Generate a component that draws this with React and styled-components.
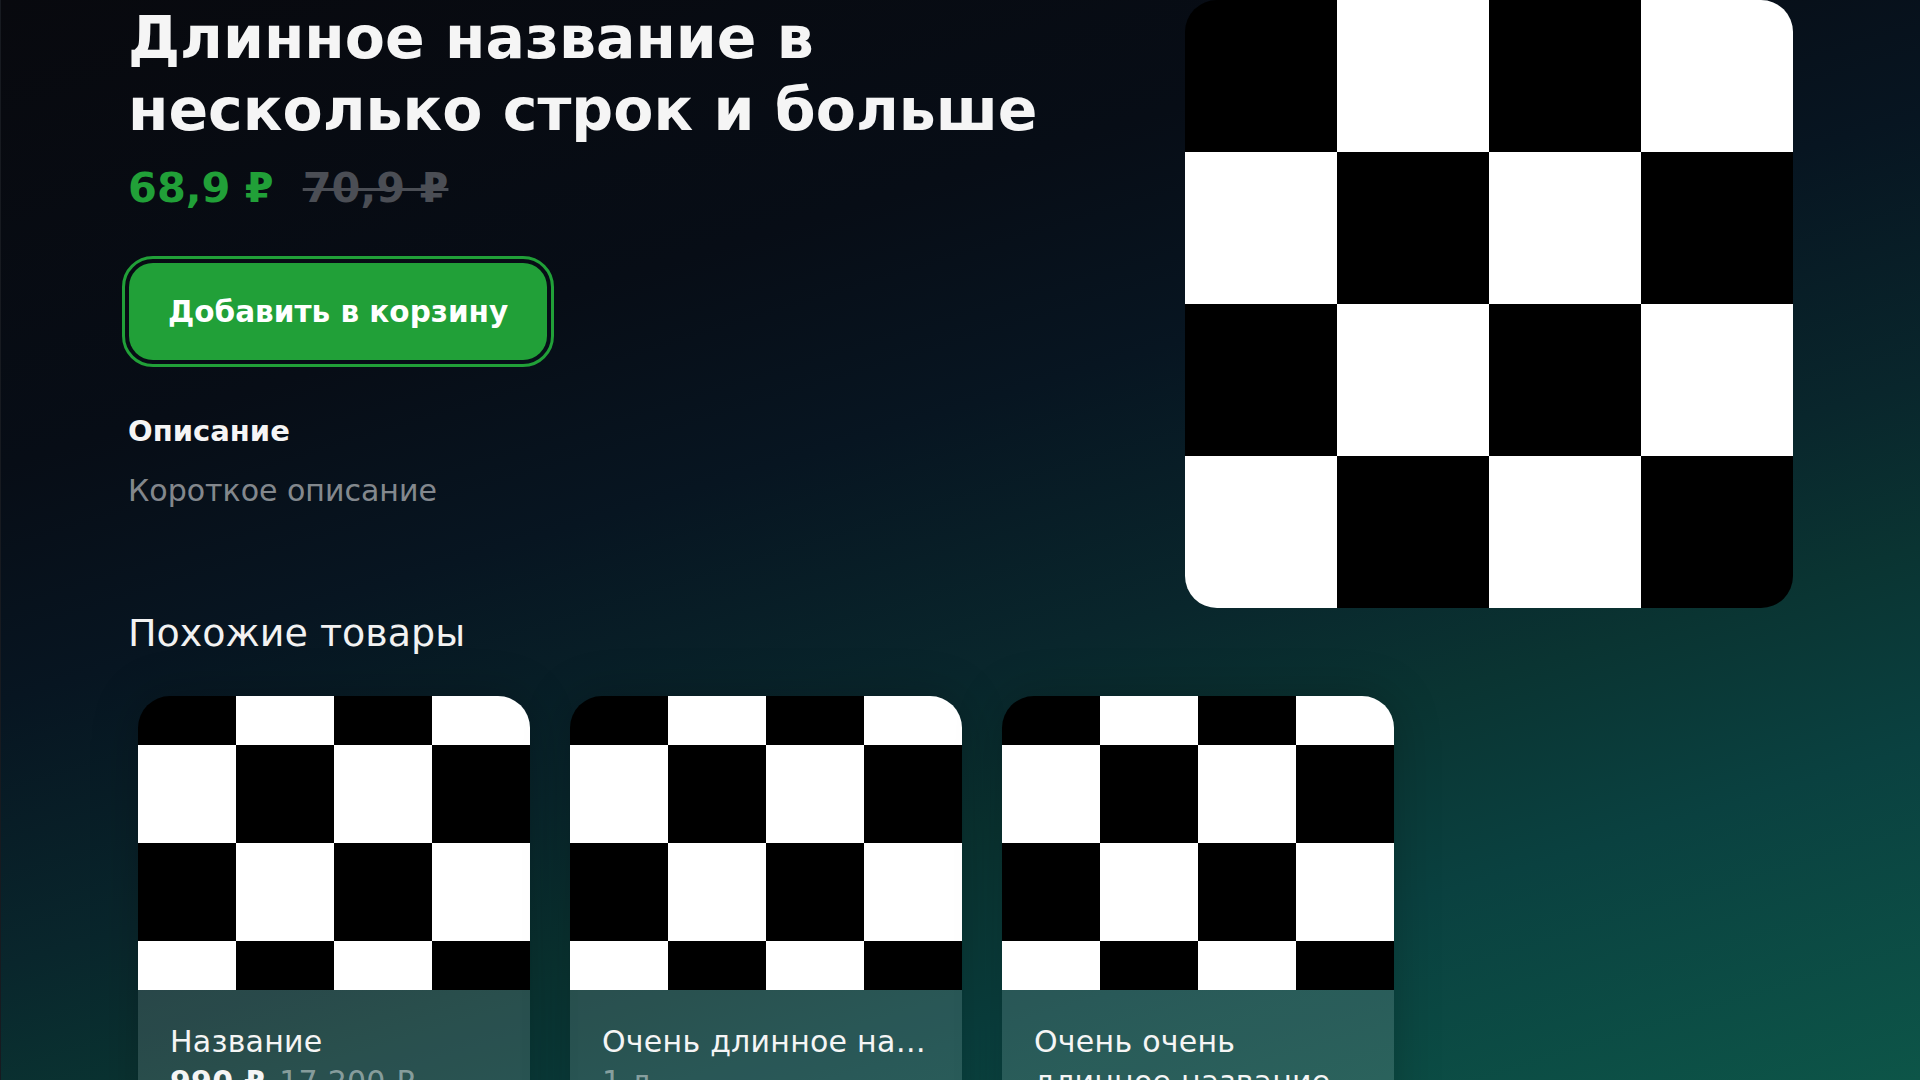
import React from "react";
import styled, { createGlobalStyle } from "styled-components";

const GlobalStyle = createGlobalStyle`
  html, body {
    margin: 0;
    padding: 0;
    width: 1920px;
    height: 1080px;
    overflow: hidden;
    background: #08090e;
  }
  * { box-sizing: border-box; }
`;

const Page = styled.div`
  width: 1920px;
  height: 1080px;
  overflow: hidden;
  padding: 0 127px 0 127px;
  font-family: "DejaVu Sans", "Noto Sans", sans-serif;
  color: #f5f5f5;
  border-left: 1px solid #171a20;
  background: linear-gradient(
    163deg,
    #08090e 0%,
    #070d16 28%,
    #071521 42%,
    #09262c 58%,
    #0a3432 68%,
    #0a4140 80%,
    #0d5548 100%
  );
`;

const TopRow = styled.div`
  display: flex;
  align-items: flex-start;
  gap: 64px;
`;

const Info = styled.div`
  flex: 1;
  min-width: 0;
  display: flex;
  flex-direction: column;
  align-items: flex-start;
  padding-top: 2px;
`;

const Title = styled.h1`
  margin: 0;
  font-size: 58.5px;
  line-height: 72px;
  font-weight: 700;
  color: #f5f5f5;
`;

const PriceRow = styled.div`
  margin-top: 18px;
  display: flex;
  align-items: baseline;
  gap: 29px;
  font-size: 41.5px;
  line-height: 48px;
  font-weight: 700;
`;

const Price = styled.span`
  color: ${(p) => (p.$old ? "#4b4e55" : "#21a038")};
  text-decoration: ${(p) => (p.$old ? "line-through" : "none")};
  text-decoration-thickness: 3px;
`;

const CartButton = styled.button`
  margin-top: 51px;
  margin-left: 1px;
  height: 97px;
  padding: 0 39px;
  border: none;
  border-radius: 24px;
  background: #21a038;
  color: #ffffff;
  font-family: inherit;
  font-size: 29.5px;
  font-weight: 700;
  line-height: 36px;
  outline: 3px solid #21a038;
  outline-offset: 4px;
  cursor: pointer;
`;

const SectionLabel = styled.div`
  margin-top: 53px;
  font-size: 29px;
  line-height: 36px;
  font-weight: 700;
  color: #f5f5f5;
`;

const Description = styled.div`
  margin-top: 24px;
  font-size: 30px;
  line-height: 36px;
  color: rgba(255, 255, 255, 0.52);
`;

const HeroImage = styled.div`
  flex: 0 0 608px;
  height: 608px;
  border-radius: 32px;
  overflow: hidden;
  & > svg {
    display: block;
    width: 100%;
    height: 100%;
  }
`;

const Heading = styled.h2`
  margin: 3px 0 0;
  font-size: 38px;
  line-height: 44px;
  font-weight: 400;
  color: #f2f2f2;
`;

const CardsRow = styled.div`
  margin-top: 41px;
  padding-left: 10px;
  display: flex;
  gap: 40px;
`;

const Card = styled.div`
  flex: 0 0 392px;
  width: 392px;
  border-radius: 32px;
  overflow: hidden;
  box-shadow: 0 0 48px rgba(0, 0, 0, 0.22);
`;

const CardImage = styled.div`
  width: 392px;
  height: 294px;
  overflow: hidden;
  & > svg {
    display: block;
    width: 100%;
    height: 100%;
  }
`;

const CardBody = styled.div`
  padding: 32px 32px 32px;
  background: rgba(255, 255, 255, 0.13);
  min-height: 200px;
`;

const CardTitle = styled.div`
  font-size: 30px;
  letter-spacing: 0.25px;
  line-height: 40px;
  color: #f5f5f5;
  overflow: hidden;
  ${(p) =>
    p.$lines === 1
      ? `white-space: nowrap; text-overflow: ellipsis;`
      : `display: -webkit-box; -webkit-line-clamp: ${p.$lines}; -webkit-box-orient: vertical;`}
`;

const CardMeta = styled.div`
  display: flex;
  align-items: baseline;
  gap: 14px;
  font-size: 30px;
  letter-spacing: 0.25px;
  line-height: 40px;
`;

const MetaValue = styled.span`
  font-weight: ${(p) => (p.$strong ? 700 : 400)};
  color: ${(p) => (p.$strong ? "#f5f5f5" : "rgba(255,255,255,0.45)")};
`;

function Checker({ crop = false }) {
  const cells = [];
  for (let r = 0; r < 4; r++) {
    for (let c = 0; c < 4; c++) {
      cells.push(
        <rect
          key={`${r}-${c}`}
          x={c * 100}
          y={r * 100}
          width={100}
          height={100}
          fill={(r + c) % 2 === 0 ? "#000" : "#fff"}
        />
      );
    }
  }
  return (
    <svg
      viewBox={crop ? "0 50 400 300" : "0 0 400 400"}
      preserveAspectRatio="none"
      shapeRendering="crispEdges"
    >
      {cells}
    </svg>
  );
}

const products = [
  {
    title: "Название",
    lines: 1,
    meta: [
      { v: "990 ₽", strong: true },
      { v: "17 200 ₽" },
    ],
  },
  {
    title: "Очень длинное название",
    lines: 1,
    meta: [{ v: "1 л" }],
  },
  {
    title: "Очень очень длинное название",
    lines: 2,
    meta: [{ v: "1 шт" }],
  },
];

export default function App() {
  return (
    <>
      <GlobalStyle />
      <Page>
        <TopRow>
          <Info>
            <Title>Длинное название в несколько строк и больше</Title>
            <PriceRow>
              <Price>68,9 ₽</Price>
              <Price $old>70,9 ₽</Price>
            </PriceRow>
            <CartButton>Добавить в корзину</CartButton>
            <SectionLabel>Описание</SectionLabel>
            <Description>Короткое описание</Description>
          </Info>
          <HeroImage>
            <Checker />
          </HeroImage>
        </TopRow>
        <Heading>Похожие товары</Heading>
        <CardsRow>
          {products.map((p, i) => (
            <Card key={i}>
              <CardImage>
                <Checker crop />
              </CardImage>
              <CardBody>
                <CardTitle $lines={p.lines}>{p.title}</CardTitle>
                <CardMeta>
                  {p.meta.map((m, j) => (
                    <MetaValue key={j} $strong={m.strong}>
                      {m.v}
                    </MetaValue>
                  ))}
                </CardMeta>
              </CardBody>
            </Card>
          ))}
        </CardsRow>
      </Page>
    </>
  );
}
